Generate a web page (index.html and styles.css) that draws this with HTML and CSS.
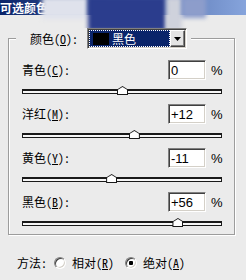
FILE: index.html
```html
<!DOCTYPE html>
<html lang="zh-CN">
<head>
    <meta charset="UTF-8">
    <meta name="viewport" content="width=device-width, initial-scale=1.0">
    <title>可选颜色</title>
    <link rel="stylesheet" href="styles.css">
</head>
<body>
    <div class="titlebar">
        <span class="title">可选颜色</span>
        <div class="smudge">
            <span class="blob blob-light"></span>
            <span class="blob blob-dark"></span>
            <span class="blob blob-band"></span>
            <span class="blob blob-mid"></span>
        </div>
    </div>
    <fieldset class="group">
        <legend class="group-head">
            <label class="label" for="colors">颜色(<u>O</u>):</label>
            <div class="select" id="colors">
                <div class="select-value"><span class="swatch"></span>黑色</div>
                <div class="select-btn">
                    <svg width="7" height="4" viewBox="0 0 7 4"><polygon points="0,0 7,0 3.5,4" fill="#000"/></svg>
                </div>
            </div>
        </legend>
        <div class="channel">
            <div class="channel-row">
                <label class="label">青色(<u>C</u>):</label>
                <input class="num" type="text" value="0">
                <span class="pct">%</span>
            </div>
            <div class="track"><span class="thumb" style="left:50%"></span></div>
        </div>
        <div class="channel">
            <div class="channel-row">
                <label class="label">洋红(<u>M</u>):</label>
                <input class="num" type="text" value="+12">
                <span class="pct">%</span>
            </div>
            <div class="track"><span class="thumb" style="left:56%"></span></div>
        </div>
        <div class="channel">
            <div class="channel-row">
                <label class="label">黄色(<u>Y</u>):</label>
                <input class="num" type="text" value="-11">
                <span class="pct">%</span>
            </div>
            <div class="track"><span class="thumb" style="left:44.5%"></span></div>
        </div>
        <div class="channel">
            <div class="channel-row">
                <label class="label">黑色(<u>B</u>):</label>
                <input class="num" type="text" value="+56">
                <span class="pct">%</span>
            </div>
            <div class="track"><span class="thumb" style="left:78%"></span></div>
        </div>
    </fieldset>
    <div class="method">
        <span class="label">方法:</span>
        <span class="radio"></span>
        <span class="label">相对(<u>R</u>)</span>
        <span class="radio radio-second checked"></span>
        <span class="label">绝对(<u>A</u>)</span>
    </div>
</body>
</html>
```

FILE: styles.css
```css
body {
    margin: 0;
    width: 246px;
    height: 280px;
    overflow: hidden;
    background-color: #ebebeb;
    font-family: "Noto Sans Mono CJK SC", "Noto Sans CJK SC", sans-serif;
    font-size: 12px;
    color: #000;
}
.titlebar {
    position: relative;
    height: 15px;
    background: linear-gradient(to right, #0a246a, #86a4dc);
}
.title {
    display: block;
    color: #fff;
    font-weight: bold;
    line-height: 15px;
}
.smudge {
    position: absolute;
    left: 0;
    top: 0;
    width: 246px;
    height: 28px;
    overflow: hidden;
}
.blob {
    position: absolute;
    top: -3px;
    filter: blur(2px);
}
.blob-light {
    left: 42px;
    width: 46px;
    height: 22px;
    background-color: #dfe2ec;
}
.blob-dark {
    left: 88px;
    width: 78px;
    height: 34px;
    background-color: #2b3d8d;
}
.blob-band {
    left: 166px;
    width: 16px;
    height: 34px;
    background-color: #cfd2dc;
}
.blob-mid {
    left: 182px;
    width: 24px;
    height: 21px;
    background-color: #8d9dcb;
}
.group {
    width: 227px;
    box-sizing: border-box;
    min-width: 0;
    margin: 13px 0 0 8px;
    padding: 11px 11px 8px 13px;
    border: 1px solid #9c9c9c;
    box-shadow: 1px 1px 0 #fff, inset 1px 1px 0 #fff;
}
.group-head {
    display: flex;
    align-items: center;
    margin-left: -6px;
    padding: 0 4px 0 14px;
    background-color: #ebebeb;
}
.label {
    line-height: 14px;
    white-space: nowrap;
}
.select {
    display: flex;
    width: 100px;
    height: 21px;
    box-sizing: border-box;
    margin-left: 9px;
    padding: 1px;
    border: 1px solid;
    border-color: #808080 #fff #fff #808080;
    box-shadow: inset 1px 1px 0 #404040, inset -1px -1px 0 #d4d0c8;
    background-color: #fff;
}
.select-value {
    flex: 1;
    display: flex;
    align-items: center;
    gap: 3px;
    padding-left: 4px;
    background-color: #0a246a;
    color: #fff;
    outline: 1px dotted #fff;
    outline-offset: -1px;
}
.swatch {
    width: 16px;
    height: 12px;
    background-color: #000;
}
.select-btn {
    display: flex;
    align-items: center;
    justify-content: center;
    width: 15px;
    box-sizing: border-box;
    border: 1px solid;
    border-color: #fff #404040 #404040 #fff;
    box-shadow: inset -1px -1px 0 #808080;
    background-color: #e4e4e4;
}
.channel + .channel {
    margin-top: 10px;
}
.channel-row {
    display: flex;
    align-items: center;
    height: 20px;
}
.channel-row .label {
    flex: 1;
}
.num {
    width: 38px;
    height: 20px;
    box-sizing: border-box;
    margin: 0 5px 0 0;
    padding: 0 2px;
    border: 1px solid;
    border-color: #808080 #fff #fff #808080;
    box-shadow: inset 1px 1px 0 #404040, inset -1px -1px 0 #d4d0c8;
    background-color: #fff;
    font-family: "Liberation Sans", Arial, sans-serif;
    font-size: 13px;
    color: #000;
    outline: none;
}
.pct {
    width: 12px;
    font-family: "Liberation Sans", Arial, sans-serif;
    font-size: 13px;
}
.track {
    position: relative;
    height: 5px;
    box-sizing: border-box;
    margin: 9px 1px 0 0;
    border: 1px solid #1a1a1a;
    border-top-width: 2px;
    background-color: #f6f6f6;
}
.thumb {
    position: absolute;
    top: -5px;
    width: 11px;
    height: 9px;
    margin-left: -5px;
    background-color: #1a1a1a;
    clip-path: polygon(50% 0, 100% 40%, 100% 100%, 0 100%, 0 40%);
}
.thumb::after {
    content: "";
    position: absolute;
    inset: 1px;
    background-color: #fff;
    clip-path: polygon(50% 0, 100% 40%, 100% 100%, 0 100%, 0 40%);
}
.method {
    display: flex;
    align-items: center;
    height: 14px;
    margin: 21px 0 0 17px;
}
.radio {
    width: 12px;
    height: 12px;
    box-sizing: border-box;
    margin: 0 6px 0 7px;
    border: 1px solid;
    border-color: #808080 #fff #fff #808080;
    border-radius: 50%;
    box-shadow: inset 1px 1px 0 #404040, inset -1px -1px 0 #d4d0c8;
    background-color: #fff;
}
.radio-second {
    margin-left: 11px;
}
.radio.checked {
    background: radial-gradient(circle, #000 0 2px, #fff 2.5px);
}
```
